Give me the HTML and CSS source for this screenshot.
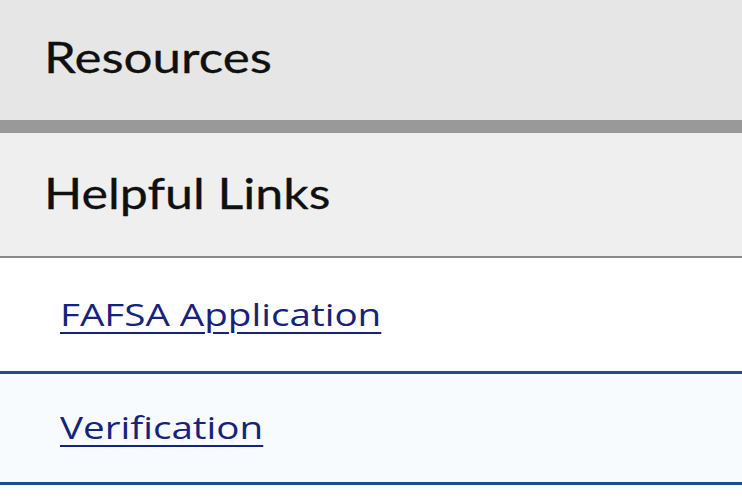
FILE: index.html
```html
<!DOCTYPE html>
<html lang="en">
<head>
<meta charset="utf-8">
<title>Resources</title>
<link rel="stylesheet" href="styles.css">
</head>
<body>
<section class="panel">
  <h2 class="panel-title"><span class="wide">Resources</span></h2>
  <div class="group">
    <h3 class="group-title"><span class="wide narrower">Helpful Links</span></h3>
    <ul class="links">
      <li class="link-row"><a class="wide-link" href="#">FAFSA Application</a></li>
      <li class="link-row alt"><a class="wide-link" href="#">Verification</a></li>
    </ul>
  </div>
</section>
</body>
</html>
```
FILE: styles.css
```css
html, body {
  margin: 0;
  padding: 0;
  background: #ffffff;
}
.panel {
  width: 100%;
}
.panel-title,
.group-title {
  margin: 0;
  box-sizing: border-box;
  display: flex;
  align-items: center;
  font-family: Lato, "Liberation Sans", sans-serif;
  font-weight: 400;
  font-size: 43px;
  line-height: 1;
  color: #101010;
  -webkit-text-stroke: 0.3px #101010;
}
.panel-title {
  height: 133px;
  padding: 0 0 8px 44px;
  background: #e6e6e6;
  border-bottom: 13px solid #999999;
}
.group-title {
  height: 125px;
  padding: 0 0 4px 44px;
  background: #efefef;
  border-bottom: 2px solid #8a8a8a;
}
.wide {
  display: inline-block;
  transform: scaleX(1.19);
  transform-origin: left center;
}
.wide.narrower {
  transform: scaleX(1.165);
}
.links {
  list-style: none;
  margin: 0;
  padding: 0;
}
.link-row {
  height: 116px;
  box-sizing: border-box;
  padding: 0 0 0 60px;
  display: flex;
  align-items: center;
  border-bottom: 3px solid #1f4f8c;
  background: #ffffff;
}
.link-row.alt {
  height: 111px;
  padding-bottom: 2px;
  background: #f7fbfe;
}
.wide-link {
  display: inline-block;
  transform: scaleX(1.245);
  transform-origin: left center;
  font-family: "Open Sans", "Liberation Sans", sans-serif;
  font-size: 31px;
  line-height: 1.3;
  color: #15237a;
  text-decoration: underline;
  text-decoration-thickness: 2px;
  text-underline-offset: 6px;
}
```
